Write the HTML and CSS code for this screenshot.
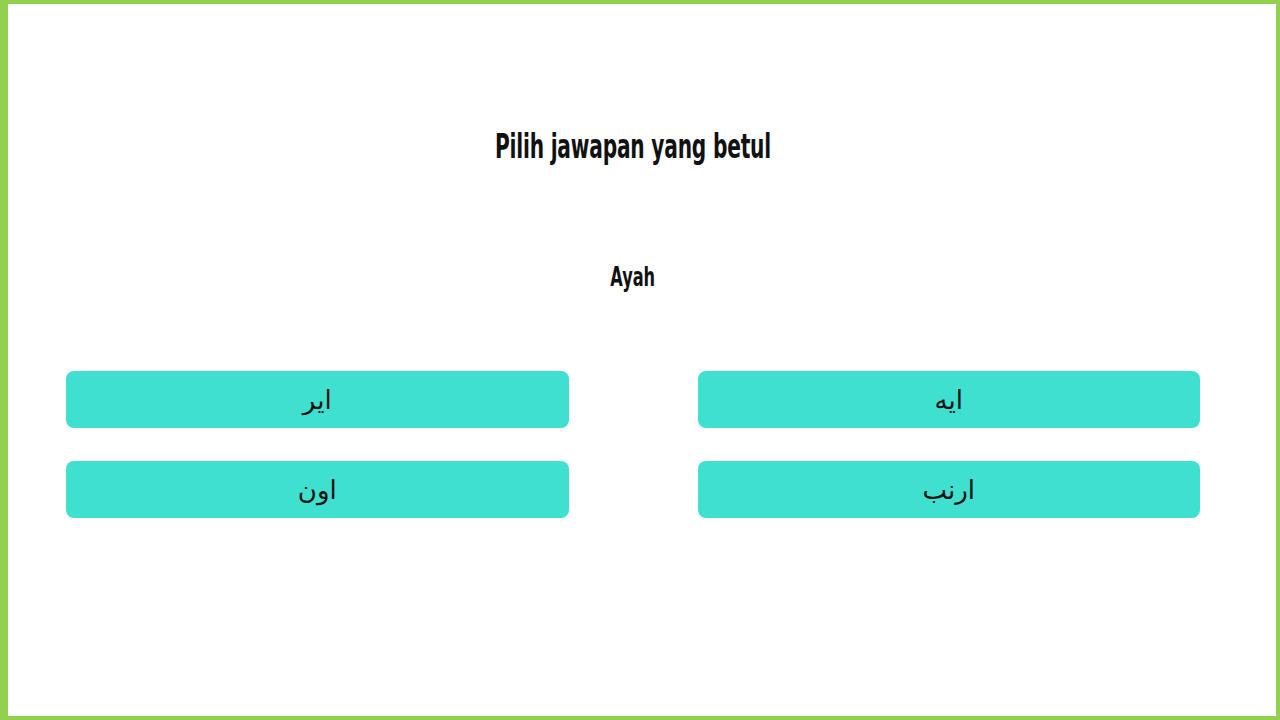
FILE: index.html
```html
<!DOCTYPE html>
<html lang="ms">
<head>
<meta charset="utf-8">
<title>Kuiz</title>
<link rel="stylesheet" href="styles.css">
</head>
<body>
<main class="quiz">
  <h1 class="quiz-title">Pilih jawapan yang betul</h1>
  <p class="quiz-word">Ayah</p>
  <div class="choices">
    <button class="choice" dir="rtl">اير</button>
    <button class="choice" dir="rtl">ايه</button>
    <button class="choice" dir="rtl">اون</button>
    <button class="choice" dir="rtl">ارنب</button>
  </div>
</main>
</body>
</html>
```
FILE: styles.css
```css
html, body {
  margin: 0;
  padding: 0;
}
body {
  box-sizing: border-box;
  width: 1280px;
  height: 720px;
  background: #ffffff;
  border-style: solid;
  border-color: #92d050;
  border-width: 4px 4px 4px 8px;
  font-family: "DejaVu Sans", sans-serif;
  font-stretch: condensed;
  overflow: hidden;
}
.quiz {
  display: flex;
  flex-direction: column;
  align-items: center;
  padding: 0 76px 0 58px;
}
.quiz-title {
  margin: 120px 0 0;
  font-size: 33px;
  line-height: 46px;
  font-weight: 700;
  color: #111;
  letter-spacing: -0.3px;
  transform: scaleX(0.68);
}
.quiz-word {
  margin: 92px 0 0;
  font-size: 27px;
  line-height: 30px;
  font-weight: 700;
  color: #111;
  transform: scaleX(0.665);
}
.choices {
  align-self: stretch;
  display: grid;
  grid-template-columns: 1fr 1fr;
  column-gap: 129px;
  row-gap: 33px;
  margin-top: 79px;
}
.choice {
  height: 57px;
  border: none;
  border-radius: 8px;
  background: #40e0d0;
  font-family: "DejaVu Sans", sans-serif;
  font-stretch: normal;
  font-size: 26px;
  color: #111;
  padding: 0;
}
```
